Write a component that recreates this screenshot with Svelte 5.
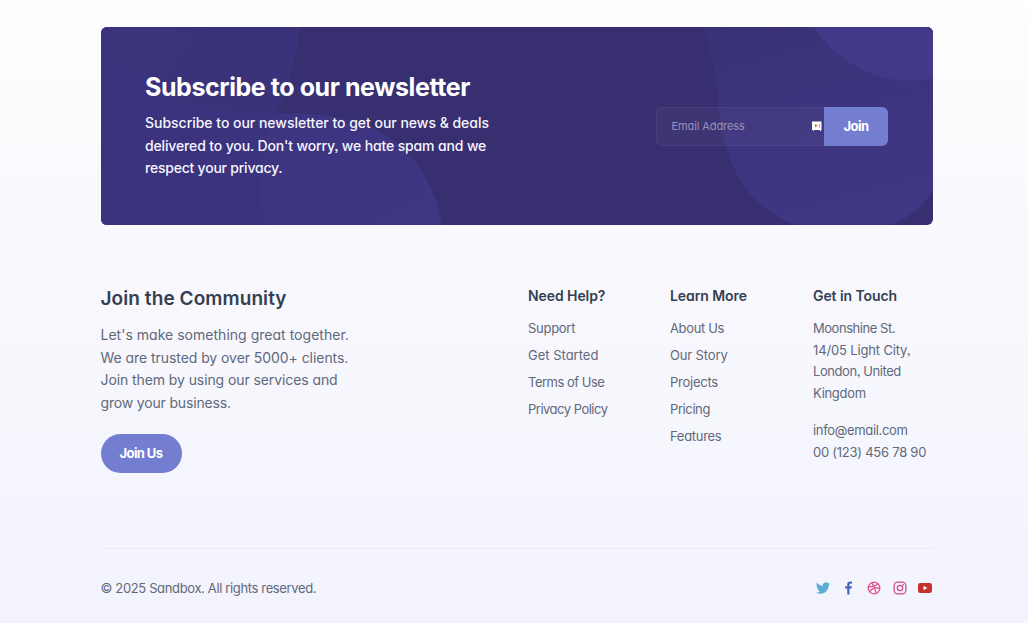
<script>
  // Each line carries its own tracking, in pixels.
  const intro = [
    ['Subscribe to our newsletter to get our news & deals', -0.02],
    ["delivered to you. Don't worry, we hate spam and we", -0.14],
    ['respect your privacy.', -0.22]
  ];
  const about = [
    ["Let's make something great together.", 0.02],
    ['We are trusted by over 5000+ clients.', -0.06],
    ['Join them by using our services and', -0.09],
    ['grow your business.', -0.17]
  ];
  const columns = [
    {
      title: 'Need Help?',
      links: [['Support', -0.28], ['Get Started', 0], ['Terms of Use', -0.5], ['Privacy Policy', -0.5]]
    },
    {
      title: 'Learn More',
      links: [['About Us', -0.35], ['Our Story', -0.14], ['Projects', -0.25], ['Pricing', -0.4], ['Features', -0.3]]
    }
  ];
  const address = [['Moonshine St.', -0.46], ['14/05 Light City,', -0.15], ['London, United', -0.43], ['Kingdom', -0.3]];
  const contact = [['info@email.com', -0.33], ['00 (123) 456 78 90', -0.25]];
</script>

{#snippet lines(list)}
  {#each list as [text, tracking]}<span class="line" style:letter-spacing="{tracking}px">{text}</span>{/each}
{/snippet}

<main>
  <section class="card">
    <svg class="shapes" viewBox="0 0 833 198" preserveAspectRatio="none" aria-hidden="true">
      <defs>
        <linearGradient id="ga" x1="0" y1="0" x2="1" y2="0.3">
          <stop offset="0" stop-color="#3b337b" /><stop offset="1" stop-color="#3b3379" />
        </linearGradient>
        <linearGradient id="gb" x1="0" y1="0" x2="1" y2="1">
          <stop offset="0" stop-color="#3c347e" /><stop offset="1" stop-color="#3f3684" />
        </linearGradient>
        <linearGradient id="gc" x1="0" y1="0" x2="0.3" y2="1">
          <stop offset="0" stop-color="#3a3276" /><stop offset="1" stop-color="#3f3684" />
        </linearGradient>
      </defs>
      <path fill="url(#ga)" d="M0 0H197.500C197 34 187 60 174 88H0Z" />
      <path fill="url(#gb)" d="M0 29C42 42 54 67 96 79C152 94 206 77 262 97C306 113 333 151 341 198H0Z" />
      <path fill="#3b337c" fill-opacity=".65" d="M0 29C42 42 54 67 96 79C125 87 150 86 174 88C157 124 155 158 165 198H0Z" />
      <path fill="url(#gc)" d="M602 0C618 36 615 83 625 119C634 152 655 183 695 198H789C811 190 824 178 833 162V0Z" />
      <path fill="#433989" d="M713 0C740 41 789 62 833 51V0Z" />
    </svg>
    <div class="copy">
      <h2>Subscribe to our newsletter</h2>
      <p>{@render lines(intro)}</p>
    </div>
    <form onsubmit={(e) => e.preventDefault()}>
      <div class="field">
        <span>Email Address</span>
        <svg width="10" height="11" viewBox="0 0 10 11"><path fill="#fff" d="M0 .5h9.500v8.500H9v1.500L7.500 9H2.200L1 10.500V9H0Z" /><path fill="#d35d68" d="M3 3 5.700 4.700 3 6.500Z" /><path fill="#8b82b5" d="M7 3h.8v3.500H7z" /></svg>
      </div>
      <button class="join">Join</button>
    </form>
  </section>

  <footer>
    <div class="top">
      <div class="community">
        <h3>Join the Community</h3>
        <p>{@render lines(about)}</p>
        <button class="pill">Join Us</button>
      </div>
      {#each columns as col}
        <nav>
          <h4>{col.title}</h4>
          <div class="links">{@render lines(col.links)}</div>
        </nav>
      {/each}
      <div class="touch">
        <h4>Get in Touch</h4>
        <address>{@render lines(address)}</address>
        <div class="contact">{@render lines(contact)}</div>
      </div>
    </div>
    <div class="bottom">
      <p>© 2025 Sandbox. All rights reserved.</p>
      <div class="social">
        <svg viewBox="0 0 24 24" fill="#5daed5"><path d="M23.950 4.570a10 10 0 0 1-2.820.78 4.960 4.960 0 0 0 2.160-2.730c-.95.560-2 .96-3.130 1.190a4.920 4.920 0 0 0-8.380 4.480C7.690 8.100 4.070 6.130 1.640 3.160a4.920 4.920 0 0 0 1.520 6.570 4.900 4.900 0 0 1-2.230-.61v.06a4.920 4.920 0 0 0 3.950 4.830 5 5 0 0 1-2.210.08 4.930 4.930 0 0 0 4.600 3.420A9.870 9.870 0 0 1 0 19.540a13.900 13.900 0 0 0 7.550 2.210c9.140 0 14.300-7.720 14.300-14.600Z" /></svg>
        <svg viewBox="0 0 24 24" fill="#4267b8"><path d="M9 23V13H5.500V8.900H9V5.600C9 2.400 11 .9 13.900.9c1.500 0 2.800.1 3.200.2v3.600h-2.200c-1.700 0-2.100.8-2.100 2v2.200h4.200L16.400 13h-3.600v10Z" /></svg>
        <svg viewBox="0 0 24 24" fill="none" stroke="#e0508c" stroke-width="2.200"><circle cx="12" cy="12" r="10" /><path d="M8 2.500c4 5.500 6.500 11 8 19M2 10c7 0 13-1 17.500-5.500M4.500 19c4-7 10-8.500 18-6" /></svg>
        <svg viewBox="0 0 24 24" fill="none" stroke="#d2488f" stroke-width="2.200"><rect x="2" y="2" width="20" height="20" rx="6" /><circle cx="12" cy="12" r="4.600" /><circle cx="17.600" cy="6.400" r="1.400" fill="#d2488f" stroke="none" /></svg>
        <svg viewBox="0 0 24 24"><rect x="0" y="3.500" width="24" height="17" rx="4" fill="#c8312b" /><path d="m9.500 8.300 6.500 3.700-6.500 3.700Z" fill="#fff" /></svg>
      </div>
    </div>
  </footer>
</main>

<style>
  :global(body) { margin: 0; }
  main {
    box-sizing: border-box;
    width: 1028px;
    height: 623px;
    overflow: hidden;
    padding: 27px 95px 0 100.500px;
    background: linear-gradient(#fefeff 0, #f8f8fd 45%, #f3f3fd 100%);
    color: #60697b;
    font-family: Inter, "Open Sans", sans-serif;
    font-feature-settings: "cv11", "ss03";
    font-size: 13px;
  }
  h2, h3, h4, p { margin: 0; padding: 0; }
  h3, h4 { color: #343f52; }
  .line { display: block; width: max-content; white-space: nowrap; }
  button { border: 0; padding: 0; background: #747ed1; color: #fff; font: inherit; font-weight: 700; font-size: 13px; letter-spacing: -.6px; }
  .card {
    position: relative;
    display: flex;
    justify-content: space-between;
    box-sizing: border-box;
    height: 198px;
    padding: 45px 45px 0 44.500px;
    border-radius: 6px;
    overflow: hidden;
    background: #382f70;
    color: #fff;
  }
  .shapes { position: absolute; inset: 0; width: 100%; height: 100%; }
  .copy, form { position: relative; }
  h2 { font-size: 25px; line-height: 31px; font-weight: 700; letter-spacing: -.43px; white-space: nowrap; }
  .copy p { margin-top: 9px; font-size: 14px; font-weight: 500; line-height: 22.600px; color: #f6f5ff; }
  form { display: flex; width: 232.500px; height: 39px; margin-top: 34.500px; }
  .field {
    box-sizing: border-box;
    display: flex;
    align-items: center;
    justify-content: space-between;
    width: 168.500px;
    padding: 0 2px 0 15px;
    border: 1px solid #ffffff0d;
    border-right: 0;
    border-radius: 6px 0 0 6px;
    background: #ffffff08;
    color: #9790b8;
    font-size: 11px;
    letter-spacing: -.1px;
  }
  .join { width: 64px; border-radius: 0 6px 6px 0; }
  .top { display: grid; grid-template-columns: 427.500px 142px 143px 120px; height: 323px; padding-top: 58px; box-sizing: border-box; }
  h3 { padding-top: 3px; font-size: 19px; line-height: 26px; font-weight: 600; letter-spacing: .08px; }
  .community p { margin-top: 12px; font-size: 14px; line-height: 22.700px; }
  .pill { display: block; width: 81px; height: 39px; margin-top: 19px; border-radius: 20px; }
  h4 { font-size: 14px; line-height: 26px; font-weight: 600; letter-spacing: -.08px; white-space: nowrap; }
  .links { margin-top: 6px; line-height: 27px; }
  address, .contact { line-height: 21.700px; font-style: normal; }
  address { margin-top: 9px; }
  .contact { margin-top: 15px; }
  .bottom { display: flex; justify-content: space-between; align-items: center; height: 78px; border-top: 1px solid #e9eaf4; letter-spacing: -.36px; }
  .social { display: flex; gap: 11.500px; padding-right: .8px; }
  .social svg { width: 14px; height: 14px; }
</style>
